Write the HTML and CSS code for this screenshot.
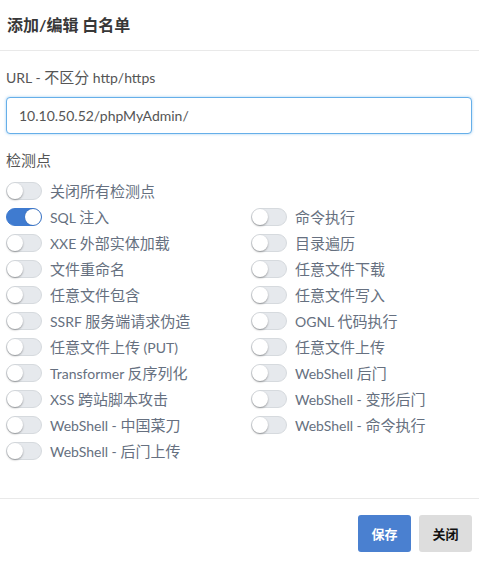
FILE: index.html
```html
<!DOCTYPE html>
<html lang="zh">
<head>
<meta charset="utf-8">
<title>添加/编辑 白名单</title>
<link rel="stylesheet" href="styles.css">
</head>
<body>
<div class="modal">
  <div class="modal-header">
    <h4 class="modal-title">添加/编辑 白名单</h4>
  </div>
  <div class="modal-body">
    <div class="field-label">URL - <span class="zh">不区分</span> http/https</div>
    <input class="url-input" type="text" value="10.10.50.52/phpMyAdmin/">
    <div class="field-label section"><span class="zh">检测点</span></div>
    <div class="checks">
      <label class="check"><span class="toggle"></span><span class="text"><span class="zh">关闭所有检测点</span></span></label>
      <div class="check empty"></div>
      <label class="check"><span class="toggle on"></span><span class="text">SQL <span class="zh">注入</span></span></label>
      <label class="check"><span class="toggle"></span><span class="text"><span class="zh">命令执行</span></span></label>
      <label class="check"><span class="toggle"></span><span class="text">XXE <span class="zh">外部实体加载</span></span></label>
      <label class="check"><span class="toggle"></span><span class="text"><span class="zh">目录遍历</span></span></label>
      <label class="check"><span class="toggle"></span><span class="text"><span class="zh">文件重命名</span></span></label>
      <label class="check"><span class="toggle"></span><span class="text"><span class="zh">任意文件下载</span></span></label>
      <label class="check"><span class="toggle"></span><span class="text"><span class="zh">任意文件包含</span></span></label>
      <label class="check"><span class="toggle"></span><span class="text"><span class="zh">任意文件写入</span></span></label>
      <label class="check"><span class="toggle"></span><span class="text">SSRF <span class="zh">服务端请求伪造</span></span></label>
      <label class="check"><span class="toggle"></span><span class="text">OGNL <span class="zh">代码执行</span></span></label>
      <label class="check"><span class="toggle"></span><span class="text"><span class="zh">任意文件上传</span> (PUT)</span></label>
      <label class="check"><span class="toggle"></span><span class="text"><span class="zh">任意文件上传</span></span></label>
      <label class="check"><span class="toggle"></span><span class="text">Transformer <span class="zh">反序列化</span></span></label>
      <label class="check"><span class="toggle"></span><span class="text">WebShell <span class="zh">后门</span></span></label>
      <label class="check"><span class="toggle"></span><span class="text">XSS <span class="zh">跨站脚本攻击</span></span></label>
      <label class="check"><span class="toggle"></span><span class="text">WebShell - <span class="zh">变形后门</span></span></label>
      <label class="check"><span class="toggle"></span><span class="text">WebShell - <span class="zh">中国菜刀</span></span></label>
      <label class="check"><span class="toggle"></span><span class="text">WebShell - <span class="zh">命令执行</span></span></label>
      <label class="check"><span class="toggle"></span><span class="text">WebShell - <span class="zh">后门上传</span></span></label>
    </div>
  </div>
  <div class="modal-footer">
    <button class="btn btn-primary" type="button">保存</button>
    <button class="btn btn-default" type="button">关闭</button>
  </div>
</div>
</body>
</html>
```
FILE: styles.css
```css
* { box-sizing: border-box; }
html, body { margin: 0; padding: 0; background: #fff; }
body {
  font-family: Lato, "Noto Sans CJK SC", sans-serif;
  font-size: 14px;
  color: #555;
}
.zh { font-size: 15px; }
.modal { width: 479px; height: 564px; display: flex; flex-direction: column; }
.modal-header {
  height: 51px;
  border-bottom: 1px solid #e9e9e9;
  padding: 0 7px;
  display: flex;
  align-items: center;
}
.modal-title {
  margin: 0;
  font-size: 16px;
  font-weight: bold;
  color: #383838;
  line-height: 20px;
}
.modal-body { padding: 16px 6px 0 6px; flex: 1; }
.field-label { line-height: 20px; height: 20px; color: #555; }
.field-label.section { margin-top: 16px; }
.url-input {
  display: block;
  width: 466px;
  height: 37px;
  margin-top: 10px;
  padding: 0 12px;
  border: 1px solid #66afe9;
  border-radius: 4px;
  box-shadow: 0 0 3px rgba(102, 175, 233, 0.6);
  font-family: Lato, "Noto Sans CJK SC", sans-serif;
  font-size: 14px;
  color: #555;
  outline: none;
}
.checks {
  margin-top: 8px;
  display: grid;
  grid-template-columns: 245px 1fr;
  grid-auto-rows: 26px;
}
.check { display: flex; align-items: center; gap: 8px; }
.toggle {
  position: relative;
  width: 36px;
  height: 18px;
  border-radius: 9px;
  background: #e6e9ed;
  border: 1px solid #d6dade;
  flex: none;
}
.toggle::after {
  content: "";
  position: absolute;
  top: 0;
  left: 0;
  width: 16px;
  height: 16px;
  border-radius: 50%;
  background: #fff;
  box-shadow: 0 1px 2px rgba(0, 0, 0, 0.35);
}
.toggle.on { background: #3f7bd0; border-color: #3f7bd0; }
.toggle.on::after { left: 18px; box-shadow: 0 0 1px rgba(0, 0, 0, 0.3); }
.text { color: #667080; line-height: 20px; height: 20px; }
.modal-footer {
  height: 66px;
  border-top: 1px solid #e9e9e9;
  padding: 16px 7px 0 0;
  display: flex;
  justify-content: flex-end;
  align-items: flex-start;
  gap: 8px;
}
.btn {
  width: 53px;
  height: 37px;
  border: none;
  border-radius: 3px;
  font-family: Lato, "Noto Sans CJK SC", sans-serif;
  font-size: 13px;
  font-weight: bold;
  padding: 0;
}
.btn-primary { background: #4a80d0; color: #fff; }
.btn-default { background: #dddddd; color: #111; }
```
